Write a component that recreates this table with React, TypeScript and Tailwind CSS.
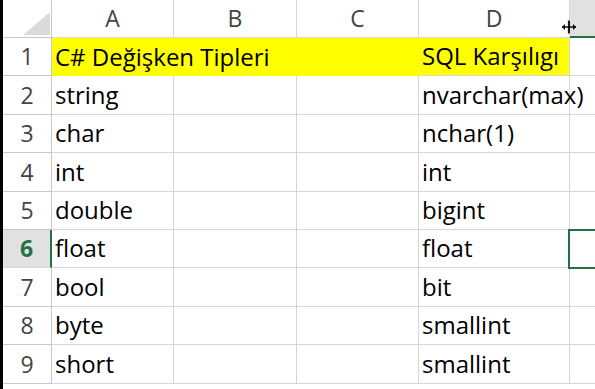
import React from 'react';

const rows: { a: string; d: string }[] = [
  { a: 'C# Değişken Tipleri', d: 'SQL Karşılıgı' },
  { a: 'string', d: 'nvarchar(max)' },
  { a: 'char', d: 'nchar(1)' },
  { a: 'int', d: 'int' },
  { a: 'double', d: 'bigint' },
  { a: 'float', d: 'float' },
  { a: 'bool', d: 'bit' },
  { a: 'byte', d: 'smallint' },
  { a: 'short', d: 'smallint' },
];

function ResizeCursor() {
  return (
    <svg
      width="16"
      height="16"
      viewBox="0 0 16 16"
      className="absolute left-[561px] top-[19px]"
    >
      <rect x="6.5" y="1" width="3" height="14" fill="#fff" />
      <path d="M7.4 1.5v13M8.6 1.5v13" stroke="#000" strokeWidth="1" />
      <path d="M1 8h14" stroke="#000" strokeWidth="1.4" />
      <path d="M1 8l3-3v6zM15 8l-3-3v6z" fill="#000" />
    </svg>
  );
}

export default function App() {
  return (
    <div
      className="relative w-[595px] h-[389px] overflow-hidden bg-white flex"
      style={{ fontFamily: '"Open Sans", sans-serif' }}
    >
      <div className="w-[3px] h-full bg-black shrink-0" />
      <div className="flex flex-col">
        {/* column headers */}
        <div className="flex h-[38px] text-[23px] text-[#444]">
          <div className="relative w-[49px] shrink-0 border-r border-b border-[#c8c8c8]">
            <svg width="32" height="25" className="absolute left-[17px] top-[11px]">
              <polygon points="30,1 30,24 3,24" fill="#dadada" />
            </svg>
          </div>
          <div className="w-[122px] shrink-0 flex items-center justify-center border-r border-b border-[#d6d6d6]">A</div>
          <div className="w-[123px] shrink-0 flex items-center justify-center border-r border-b border-[#d6d6d6]">B</div>
          <div className="w-[122px] shrink-0 flex items-center justify-center border-r border-b border-[#d6d6d6]">C</div>
          <div className="w-[151px] shrink-0 flex items-center justify-center border-r border-b border-[#d6d6d6]">D</div>
          <div className="w-[40px] shrink-0 bg-[#e1e1e1] border-b-2 border-[#217346]" />
        </div>

        {rows.map((r, i) => {
          const n = i + 1;
          const sel = n === 6;
          const yellow = n === 1 ? 'bg-[#ffff00]' : '';
          return (
            <div key={n} className="flex h-[38.4px] text-[24px] text-black">
              <div
                className={
                  sel
                    ? 'w-[49px] shrink-0 flex items-center justify-center text-[23px] bg-[#e1e1e1] text-[#217346] font-bold border-r-2 border-r-[#217346] border-b border-b-[#d6d6d6]'
                    : 'w-[49px] shrink-0 flex items-center justify-center text-[23px] text-[#444] border-r border-b border-[#c8c8c8]'
                }
              >
                {n}
              </div>
              <div className={`w-[122px] shrink-0 flex items-end pb-[1px] pl-[3px] whitespace-nowrap ${n === 1 ? 'bg-[#ffff00]' : 'border-r border-b border-[#d6d6d6]'}`}>
                <span className="relative z-10">{r.a}</span>
              </div>
              <div className={`w-[123px] shrink-0 ${n === 1 ? 'bg-[#ffff00]' : 'border-r border-b border-[#d6d6d6]'}`} />
              <div className={`w-[122px] shrink-0 ${n === 1 ? 'bg-[#ffff00]' : 'border-r border-b border-[#d6d6d6]'}`} />
              <div className={`w-[151px] shrink-0 flex items-end pb-[1px] pl-[3px] whitespace-nowrap border-r border-b border-[#d6d6d6] ${yellow}`}>
                <span className="relative z-10">{r.d}</span>
              </div>
              <div className="relative w-[40px] shrink-0 border-b border-[#d6d6d6]">
                {sel && (
                  <div className="absolute left-[-2px] top-[-1px] w-[40px] h-[40px] border-2 border-[#217346]" />
                )}
              </div>
            </div>
          );
        })}
      </div>
      <ResizeCursor />
    </div>
  );
}
